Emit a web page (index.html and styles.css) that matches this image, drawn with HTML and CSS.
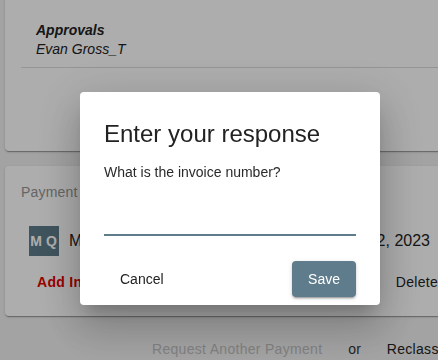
FILE: index.html
```html
<!DOCTYPE html>
<html lang="en">
<head>
    <meta charset="UTF-8">
    <meta name="viewport" content="width=device-width, initial-scale=1.0">
    <title>Payment request</title>
    <link rel="stylesheet" href="styles.css">
</head>
<body>

    <div class="page">
        <!-- approvals summary -->
        <div class="card summary">
            <div class="approvals">
                <div class="approvals-title">Approvals</div>
                <div class="approvals-name">Evan Gross_T</div>
            </div>
            <div class="divider"></div>
        </div>

        <!-- payment card -->
        <div class="card payment">
            <div class="card-label">Payment details</div>
            <div class="payment-row">
                <div class="avatar">MQ</div>
                <span class="payee">Mary Quinn</span>
                <span class="payment-date">Jan 12, 2023</span>
            </div>
            <div class="payment-actions">
                <button class="link-button add">Add Invoice</button>
                <button class="link-button delete">Delete</button>
            </div>
        </div>

        <div class="footer-actions">
            <button class="link-button disabled">Request Another Payment</button>
            <span class="or">or</span>
            <button class="link-button">Reclassify</button>
        </div>
    </div>

    <!-- dialog -->
    <div class="backdrop">
        <div class="dialog">
            <h2 class="dialog-title">Enter your response</h2>
            <p class="dialog-question">What is the invoice number?</p>
            <div class="field">
                <input type="text" class="field-input">
            </div>
            <div class="dialog-actions">
                <button class="text-button">Cancel</button>
                <button class="save-button">Save</button>
            </div>
        </div>
    </div>

</body>
</html>
```

FILE: styles.css
```css
body {
    margin: 0;
    background: #f0f0f0;
    font-family: "Liberation Sans", Arial, sans-serif;
    color: #222;
    overflow: hidden;
    height: 100vh;
}

.page {
    width: 470px;
    padding: 0 5px;
}

.card {
    background: #ffffff;
    border-radius: 4px;
    box-shadow: 0 2px 1px -1px rgba(0, 0, 0, 0.2), 0 1px 1px rgba(0, 0, 0, 0.14), 0 1px 3px rgba(0, 0, 0, 0.12);
}

/* 审批 */
.summary {
    margin-top: -12px;
    padding: 33px 0 83px 16px;
}

.approvals {
    padding-left: 15px;
    font-size: 14px;
    line-height: 19px;
    font-style: italic;
}

.approvals-title {
    font-weight: bold;
}

.divider {
    margin-top: 8px;
    border-top: 1px solid #dcdcdc;
}

/* 付款卡片 */
.payment {
    margin-top: 15px;
    padding: 17px 37px 24px 16px;
}

.card-label {
    font-size: 14px;
    line-height: 19px;
    color: #959595;
    letter-spacing: 0.2px;
}

.payment-row {
    display: flex;
    align-items: center;
    margin-top: 24px;
    padding-left: 8px;
    padding-right: 8px;
}

.avatar {
    width: 30px;
    height: 30px;
    background: #5e7c8b;
    color: #ffffff;
    font-size: 14px;
    font-weight: bold;
    letter-spacing: 4px;
    text-indent: 3px;
    display: flex;
    align-items: center;
    justify-content: center;
}

.payee {
    margin-left: 10px;
    font-size: 16px;
}

.payment-date {
    margin-left: auto;
    font-size: 16px;
}

.payment-actions {
    display: flex;
    margin-top: 17px;
}

.link-button {
    background: none;
    border: none;
    padding: 0;
    font-family: inherit;
    font-size: 14px;
    line-height: 19px;
    letter-spacing: 0.3px;
    color: #222;
    cursor: pointer;
}

.link-button.add {
    margin-left: 16px;
    color: #e20000;
    font-weight: bold;
}

.link-button.delete {
    margin-left: auto;
}

.link-button.disabled {
    color: #bdbdbd;
}

.footer-actions {
    display: flex;
    gap: 26px;
    margin-top: 24px;
    padding-left: 147px;
    font-size: 14px;
    line-height: 19px;
}

.or {
    color: #333;
}

/* 弹窗遮罩 */
.backdrop {
    position: fixed;
    left: 0;
    top: 0;
    right: 0;
    bottom: 0;
    background: rgba(0, 0, 0, 0.32);
    padding: 92px 0 0 80px;
}

.dialog {
    width: 300px;
    box-sizing: border-box;
    background: #ffffff;
    border-radius: 4px;
    padding: 26px 24px 8px;
    box-shadow: 0 11px 15px -7px rgba(0, 0, 0, 0.2), 0 24px 38px 3px rgba(0, 0, 0, 0.14), 0 9px 46px 8px rgba(0, 0, 0, 0.12);
}

.dialog-title {
    margin: 0;
    font-size: 24px;
    line-height: 32px;
    font-weight: normal;
    color: #222;
}

.dialog-question {
    margin: 13px 0 0;
    font-size: 14px;
    line-height: 19px;
    color: #2a2a2a;
}

.field {
    height: 52px;
    border-bottom: 2px solid #5e7c8b;
    display: flex;
    align-items: flex-end;
}

.field-input {
    width: 100%;
    border: none;
    outline: none;
    padding: 0 0 6px;
    font-family: inherit;
    font-size: 16px;
    background: transparent;
}

.dialog-actions {
    display: flex;
    justify-content: space-between;
    margin-top: 25px;
}

.text-button,
.save-button {
    height: 36px;
    padding: 0 16px;
    border: none;
    border-radius: 4px;
    font-family: inherit;
    font-size: 14px;
    cursor: pointer;
}

.text-button {
    background: none;
    color: #222;
}

.save-button {
    background: #5e7c8b;
    color: #ffffff;
    box-shadow: 0 3px 1px -2px rgba(0, 0, 0, 0.2), 0 2px 2px rgba(0, 0, 0, 0.14), 0 1px 5px rgba(0, 0, 0, 0.12);
}
```
